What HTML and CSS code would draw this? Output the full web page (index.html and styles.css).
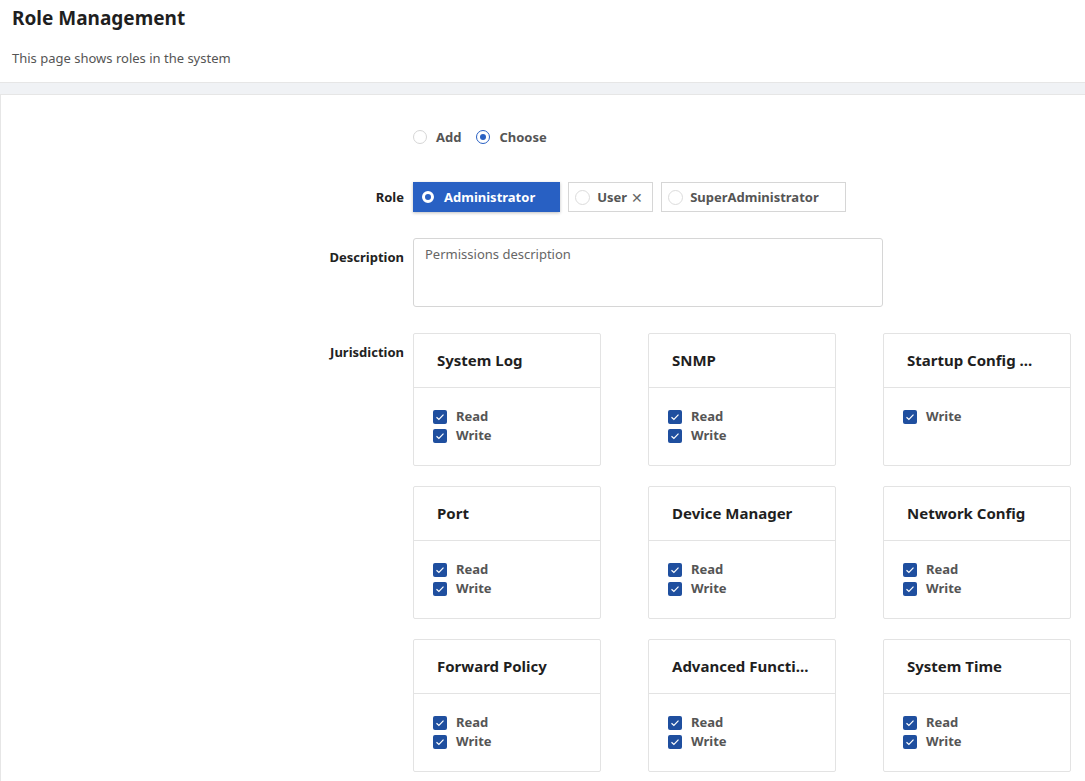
FILE: index.html
```html
<!DOCTYPE html>
<html lang="en">
<head>
  <meta charset="UTF-8" />
  <title>Role Management</title>
  <link rel="stylesheet" href="styles.css">
</head>
<body>
  <header class="page-header">
    <h1 class="page-title">Role Management</h1>
    <p class="page-desc">This page shows roles in the system</p>
  </header>
  <div class="band"></div>

  <section class="panel">
    <div class="form-row row-mode">
      <div class="form-label"></div>
      <div class="form-field mode-group">
        <label class="radio"><span class="radio-dot"></span>Add</label>
        <label class="radio checked"><span class="radio-dot"></span>Choose</label>
      </div>
    </div>

    <div class="form-row row-role">
      <div class="form-label">Role</div>
      <div class="form-field role-group">
        <span class="role-btn active"><span class="role-dot"></span>Administrator</span>
        <span class="role-btn"><span class="role-dot"></span>User<span class="role-close">&#x2715;</span></span>
        <span class="role-btn"><span class="role-dot"></span>SuperAdministrator</span>
      </div>
    </div>

    <div class="form-row row-desc">
      <div class="form-label tall">Description</div>
      <div class="form-field">
        <div class="textarea">Permissions description</div>
      </div>
    </div>

    <div class="form-row">
      <div class="form-label tall">Jurisdiction</div>
      <div class="form-field perm-grid" id="permGrid"></div>
    </div>
  </section>

  <script>
    const perms = [
      {name:'System Log', opts:['Read','Write']},
      {name:'SNMP', opts:['Read','Write']},
      {name:'Startup Config Management', opts:['Write']},
      {name:'Port', opts:['Read','Write']},
      {name:'Device Manager', opts:['Read','Write']},
      {name:'Network Config', opts:['Read','Write']},
      {name:'Forward Policy', opts:['Read','Write']},
      {name:'Advanced Functions', opts:['Read','Write']},
      {name:'System Time', opts:['Read','Write']}
    ];

    const check = '<svg viewBox="0 0 14 14" width="14" height="14"><path d="M3.5 7.2l2.4 2.3 4.6-4.8" fill="none" stroke="#fff" stroke-width="1.2"/></svg>';

    const shortName = n => n.length > 15 ? n.slice(0, 15) + '...' : n;

    document.getElementById('permGrid').innerHTML = perms.map(p => `
      <div class="perm-card">
        <div class="perm-head" title="${p.name}">${shortName(p.name)}</div>
        <div class="perm-body">
          ${p.opts.map(o => `<div class="check"><span class="check-box">${check}</span>${o}</div>`).join('')}
        </div>
      </div>
    `).join('');
  </script>
</body>
</html>
```

FILE: styles.css
```css
*,*::before,*::after{box-sizing:border-box;margin:0;padding:0;}
body{background:#fff;color:#222;font-family:"Noto Sans","Open Sans",Arial,sans-serif;font-size:13px;}

.page-header{height:83px;padding:6px 12px 0;border-bottom:1px solid #e6e6e6;}
.page-title{font-size:19px;font-weight:700;line-height:24px;color:#1f1f1f;}
.page-desc{margin-top:19px;font-size:13px;line-height:18px;color:#555;}
.band{height:12px;background:#f0f2f5;border-bottom:1px solid #e6e6e6;}

.panel{border-left:1px solid #e6e6e6;padding:30px 0 40px;}
.form-row{display:grid;grid-template-columns:403px 1fr;column-gap:9px;}
.row-mode{margin-bottom:33px;}
.row-role{margin-bottom:26px;}
.row-desc{margin-bottom:26px;}
.form-label{text-align:right;font-weight:700;line-height:18px;padding-top:6px;color:#222;}
.form-label.tall{padding-top:10px;}

.mode-group{display:flex;align-items:center;gap:15px;height:24px;}
.radio{display:flex;align-items:center;gap:9px;font-weight:700;color:#555;font-size:13px;}
.radio-dot{width:14px;height:14px;border:1px solid #d6d6d6;border-radius:50%;background:#fff;position:relative;}
.radio.checked .radio-dot{border-color:#2860c3;}
.radio.checked .radio-dot::after{content:"";position:absolute;left:3px;top:3px;width:6px;height:6px;border-radius:50%;background:#2860c3;}

.role-group{display:flex;gap:8px;}
.role-btn{display:flex;align-items:center;height:30px;padding:0 26px 0 6px;border:1px solid #d6d6d6;font-weight:700;color:#555;background:#fff;}
.role-dot{width:15px;height:15px;border:1px solid #dcdcdc;border-radius:50%;margin-right:7px;}
.role-btn.active{background:#2860c3;border-color:#2860c3;color:#fff;padding:0 24px 0 8px;box-shadow:0 1px 3px rgba(0,0,0,.25);}
.role-btn.active .role-dot{width:12px;height:12px;border:3px solid #fff;margin-right:10px;}
.role-close{font-weight:300;font-size:14px;margin-left:4px;color:#666;}
.role-btn:nth-child(2){padding-right:9px;}

.textarea{width:470px;height:69px;border:1px solid #d6d6d6;border-radius:3px;padding:6px 11px;color:#666;line-height:18px;}

.perm-grid{display:grid;grid-template-columns:repeat(3,188px);column-gap:47px;row-gap:20px;}
.perm-card{height:133px;border:1px solid #e3e3e3;border-radius:2px;}
.perm-head{height:54px;padding:0 10px 0 23px;border-bottom:1px solid #e3e3e3;font-size:15px;font-weight:700;color:#1f1f1f;white-space:nowrap;line-height:53px;}
.perm-body{padding:19px 19px;}
.check{display:flex;align-items:center;gap:9px;line-height:19px;font-weight:700;color:#555;}
.check-box{width:14px;height:14px;border-radius:2px;background:#1f4f9f;display:flex;}
```
